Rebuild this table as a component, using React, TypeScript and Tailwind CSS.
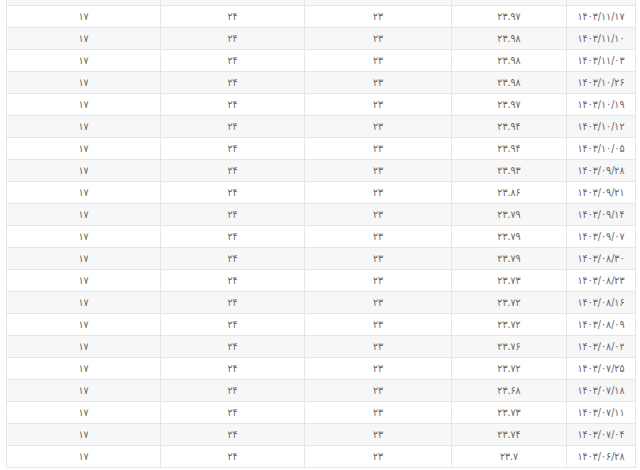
import React from 'react';

const toFa = (s: string) => s.replace(/[0-9]/g, (d) => '۰۱۲۳۴۵۶۷۸۹'[Number(d)]);

const rows: [string, string][] = [
  ['1403/11/17', '23.97'],
  ['1403/11/10', '23.98'],
  ['1403/11/03', '23.98'],
  ['1403/10/26', '23.98'],
  ['1403/10/19', '23.97'],
  ['1403/10/12', '23.94'],
  ['1403/10/05', '23.94'],
  ['1403/09/28', '23.93'],
  ['1403/09/21', '23.86'],
  ['1403/09/14', '23.79'],
  ['1403/09/07', '23.79'],
  ['1403/08/30', '23.79'],
  ['1403/08/23', '23.73'],
  ['1403/08/16', '23.72'],
  ['1403/08/09', '23.72'],
  ['1403/08/02', '23.76'],
  ['1403/07/25', '23.72'],
  ['1403/07/18', '23.68'],
  ['1403/07/11', '23.73'],
  ['1403/07/04', '23.74'],
  ['1403/06/28', '23.7'],
];

const cell = 'border border-[#e6e6e6] p-0';

const App: React.FC = () => {
  return (
    <div className="h-[470px] w-[640px] overflow-hidden bg-white pl-[6px]">
      <table
        dir="rtl"
        className="-mt-[17px] w-[629px] table-fixed border-collapse text-center text-[10.5px] text-[#666]"
        style={{ fontFamily: '"DejaVu Sans Condensed", "DejaVu Sans", sans-serif' }}
      >
        <colgroup>
          <col className="w-[69px]" />
          <col className="w-[115px]" />
          <col className="w-[147px]" />
          <col className="w-[144px]" />
          <col className="w-[154px]" />
        </colgroup>
        <tbody>
          {/* row scrolled above the view */}
          <tr className="h-[22px] bg-[#f7f7f7]">
            <td className={cell} />
            <td className={cell} />
            <td className={cell} />
            <td className={cell} />
            <td className={cell} />
          </tr>
          {rows.map(([date, price], i) => (
            <tr key={date} className={`h-[22px] ${i % 2 === 1 ? 'bg-[#f7f7f7]' : 'bg-white'}`}>
              <td className={cell}>{toFa(date)}</td>
              <td className={cell}>{toFa(price)}</td>
              <td className={cell}>{toFa('23')}</td>
              <td className={cell}>{toFa('24')}</td>
              <td className={cell}>{toFa('17')}</td>
            </tr>
          ))}
        </tbody>
      </table>
    </div>
  );
};

export default App;
